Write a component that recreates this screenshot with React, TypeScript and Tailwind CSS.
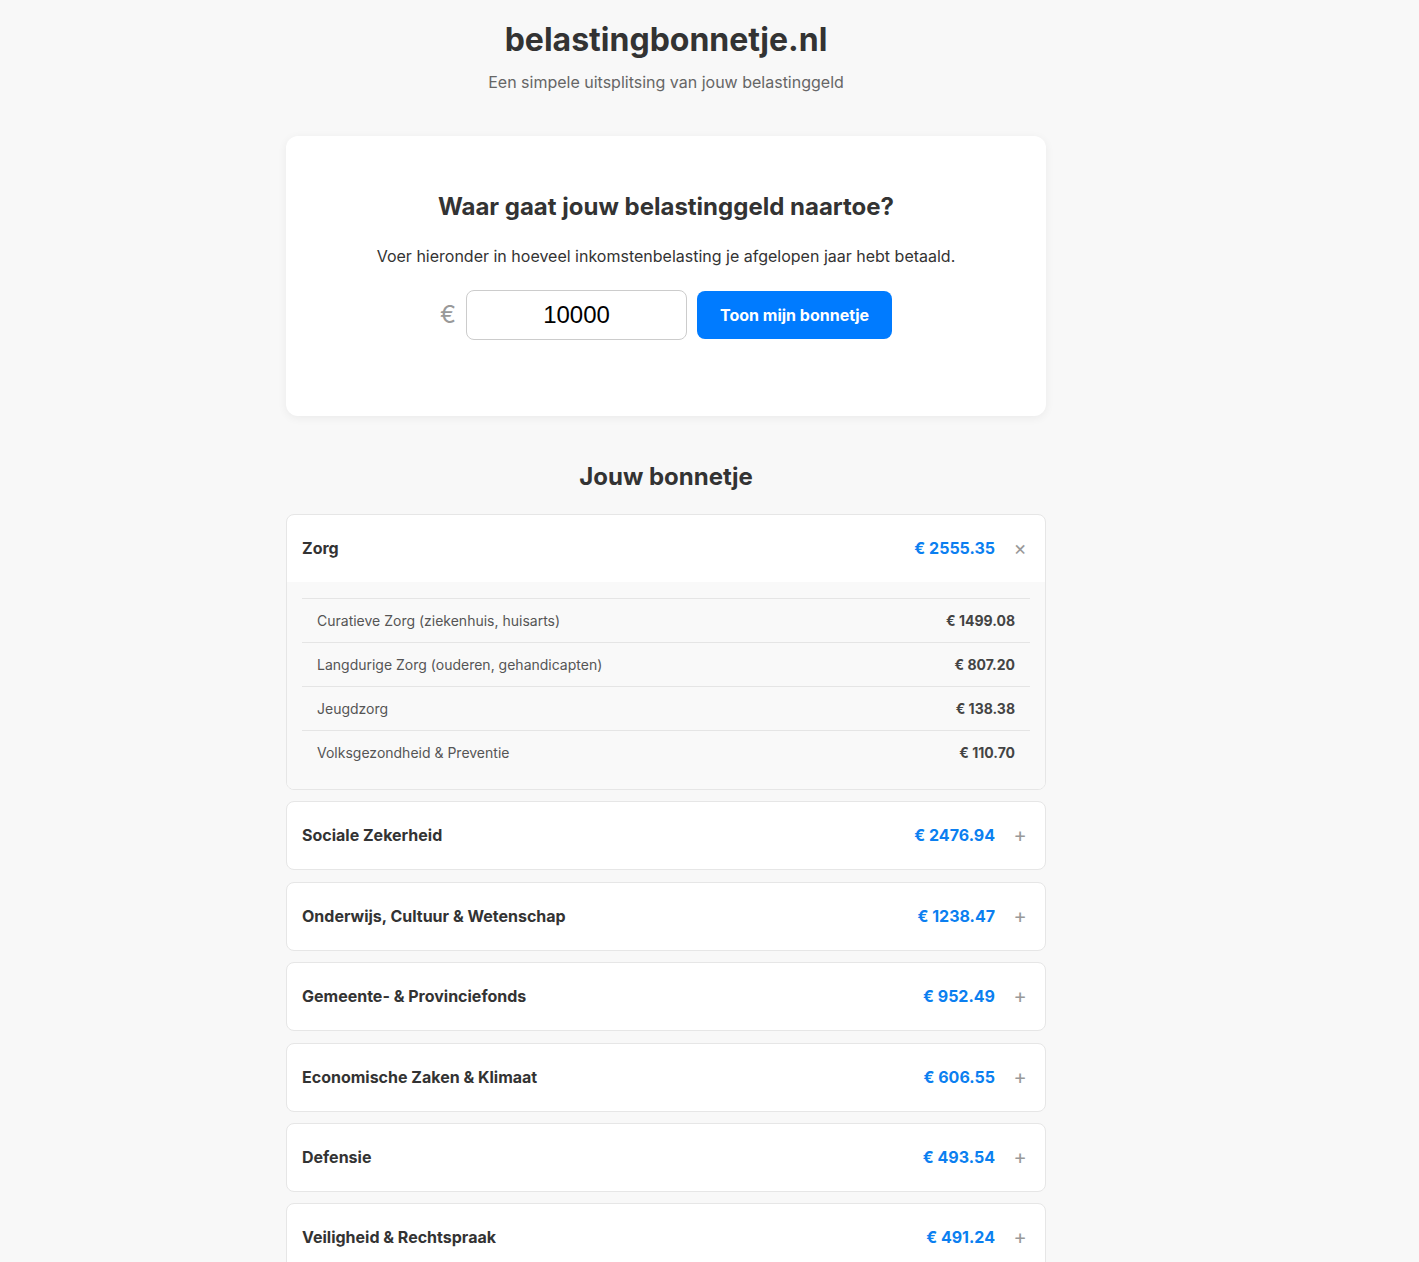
import { useState } from "react";

type Sub = { name: string; amount: string };
type Item = { name: string; amount: string; subs?: Sub[] };

const items: Item[] = [
  {
    name: "Zorg",
    amount: "€ 2555.35",
    subs: [
      { name: "Curatieve Zorg (ziekenhuis, huisarts)", amount: "€ 1499.08" },
      { name: "Langdurige Zorg (ouderen, gehandicapten)", amount: "€ 807.20" },
      { name: "Jeugdzorg", amount: "€ 138.38" },
      { name: "Volksgezondheid & Preventie", amount: "€ 110.70" },
    ],
  },
  { name: "Sociale Zekerheid", amount: "€ 2476.94" },
  { name: "Onderwijs, Cultuur & Wetenschap", amount: "€ 1238.47" },
  { name: "Gemeente- & Provinciefonds", amount: "€ 952.49" },
  { name: "Economische Zaken & Klimaat", amount: "€ 606.55" },
  { name: "Defensie", amount: "€ 493.54" },
  { name: "Veiligheid & Rechtspraak", amount: "€ 491.24" },
];

function Row({ item, open, onToggle }: { item: Item; open: boolean; onToggle: () => void }) {
  return (
    <div className="mb-[11.4px] rounded-lg border border-[#e6e6e6] bg-white overflow-hidden">
      <button onClick={onToggle} className="flex w-full items-center px-[15px] py-6 text-left">
        <span className="flex-1 text-[16px] leading-[19px] font-bold text-[#333]">{item.name}</span>
        <span className="text-[16px] leading-[19px] font-bold text-[#0b7ff0]">{item.amount}</span>
        <span className="ml-[15px] w-5 text-center text-[20px] leading-[19px] text-[#999]">
          {open ? "×" : "+"}
        </span>
      </button>
      {open && item.subs && (
        <div className="bg-[#f9f9f9] px-[15px] pt-4 pb-[15px]">
          {item.subs.map((s) => (
            <div key={s.name} className="flex items-center border-t border-[#e5e5e5] px-[15px] py-3 text-[14px] leading-[19px]">
              <span className="flex-1 text-[#555]">{s.name}</span>
              <span className="font-bold text-[#444]">{s.amount}</span>
            </div>
          ))}
        </div>
      )}
    </div>
  );
}

export default function App() {
  const [open, setOpen] = useState<string | null>("Zorg");
  const [value, setValue] = useState("10000");

  return (
    <div className="min-h-screen bg-[#f8f8f8] font-['Inter',sans-serif] text-[#333]">
      <div className="ml-[286px] w-[760px] pt-[20px] pb-10">
        <h1 className="text-center text-[32px] leading-[40px] font-bold text-[#333]">belastingbonnetje.nl</h1>
        <p className="mt-[12px] text-center text-[16px] leading-5 text-[#666]">
          Een simpele uitsplitsing van jouw belastinggeld
        </p>

        <div className="mt-[44px] rounded-xl bg-white px-10 pt-[56px] pb-[76px] shadow-[0_2px_10px_rgba(0,0,0,0.06)]">
          <h2 className="text-center text-[24px] leading-[29px] font-bold text-[#333]">
            Waar gaat jouw belastinggeld naartoe?
          </h2>
          <p className="mt-[26px] text-center text-[16px] leading-[19px] text-[#333]">
            Voer hieronder in hoeveel inkomstenbelasting je afgelopen jaar hebt betaald.
          </p>
          <div className="mt-[24px] flex items-center justify-center gap-[10px]">
            <span className="text-[24px] text-[#999]">€</span>
            <input
              value={value}
              onChange={(e) => setValue(e.target.value)}
              className="h-[50px] w-[221px] rounded-lg border border-[#ccc] bg-white text-center font-['Liberation_Sans',sans-serif] text-[24px] text-black outline-none"
            />
            <button className="h-[48px] w-[195px] rounded-lg bg-[#007bff] text-[16px] font-bold text-white">
              Toon mijn bonnetje
            </button>
          </div>
        </div>

        <h2 className="mt-[46px] text-center text-[24px] leading-[29px] font-bold text-[#333]">Jouw bonnetje</h2>

        <div className="mt-[23px]">
          {items.map((it) => (
            <Row
              key={it.name}
              item={it}
              open={open === it.name}
              onToggle={() => setOpen(open === it.name ? null : it.name)}
            />
          ))}
        </div>
      </div>
    </div>
  );
}
